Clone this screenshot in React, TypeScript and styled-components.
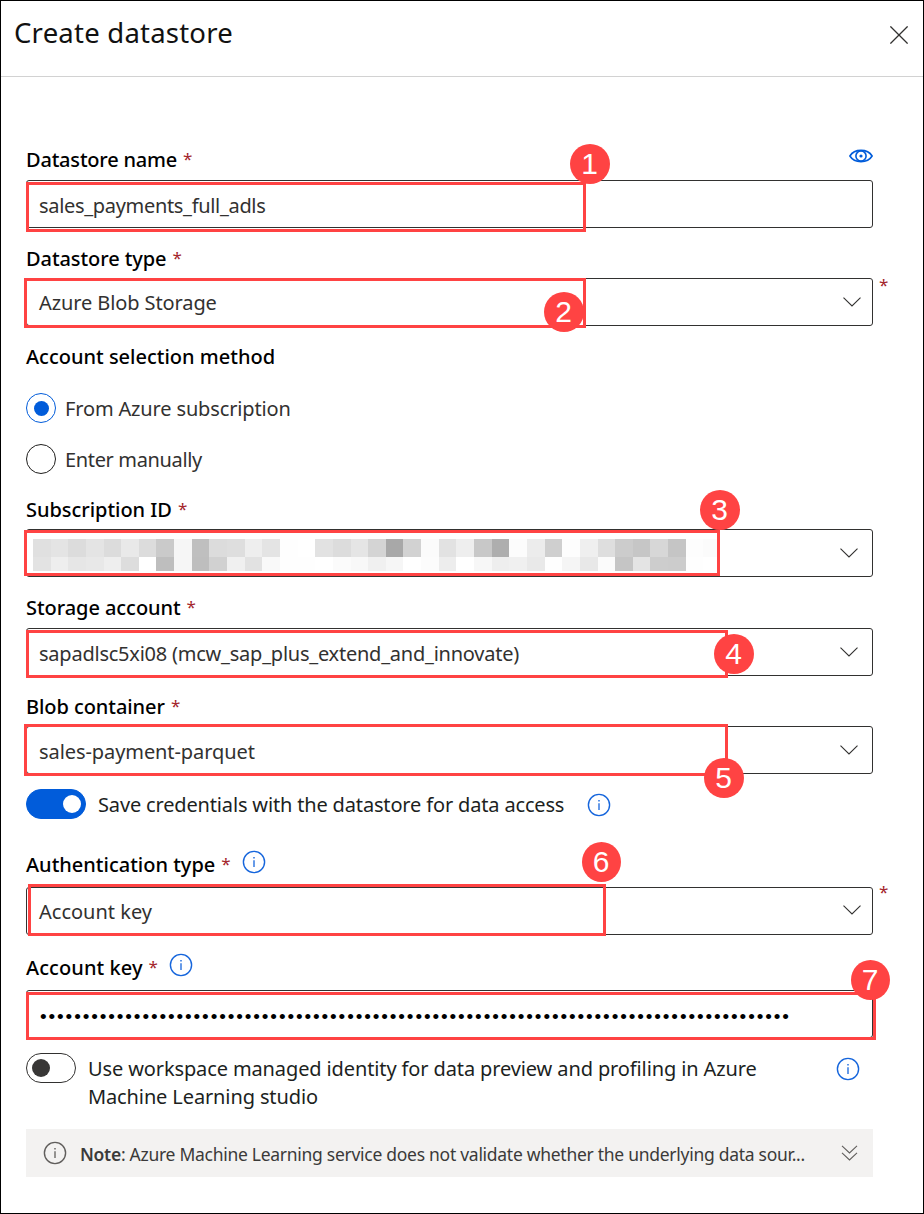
import React from "react";
import styled, { createGlobalStyle } from "styled-components";

const GlobalStyle = createGlobalStyle`
  *, *::before, *::after { box-sizing: border-box; }
  body { margin: 0; background: #fff; }
`;

const ACCENT = "#015cda";
const MARK = "#ff4343";

const Panel = styled.div`
  width: 924px;
  height: 1214px;
  border: 1px solid #000;
  background: #fff;
  color: #323130;
  font-family: "Noto Sans", "Open Sans", sans-serif;
  font-size: 20px;
  font-weight: 380;
  overflow: hidden;
`;

const Header = styled.header`
  display: flex;
  justify-content: space-between;
  height: 76px;
  padding: 12px 15px 0 13px;
  border-bottom: 1px solid #d2d2d2;
`;

const Title = styled.h1`
  margin: 0;
  color: #111;
  font-size: 27.5px;
  font-weight: 380;
  line-height: 40px;
  letter-spacing: 0.22px;
`;

const CloseButton = styled.button`
  display: flex;
  width: 18px;
  height: 18px;
  margin-top: 13px;
  padding: 0;
  border: 0;
  background: none;
`;

const Form = styled.main`
  width: 847px;
  margin-left: 25px;
  padding-top: 68px;
`;

const LabelRow = styled.div<{ $before?: number; $after?: number; $ls?: number }>`
  display: flex;
  align-items: center;
  height: 28px;
  margin-top: ${(p) => p.$before ?? 16}px;
  margin-bottom: ${(p) => p.$after ?? 6}px;
  padding-top: 2px;
  color: #000;
  font-weight: 500;
  line-height: 26px;
  white-space: nowrap;
  letter-spacing: ${(p) => p.$ls ?? 0}px;
`;

const Star = styled.span`
  margin: -3px 0 0 6px;
  color: #a4262c;
  font-size: 17px;
  font-weight: 400;
`;

const OuterStar = styled(Star)<{ $top?: number }>`
  position: absolute;
  left: 852px;
  top: ${(p) => p.$top ?? -6}px;
  margin: 0;
  line-height: 24px;
`;

const LabelIcon = styled.span`
  display: flex;
  margin: -6px 0 0 11px;
`;

const EyeButton = styled.button`
  display: flex;
  margin: -8px 0 0 auto;
  padding: 0;
  border: 0;
  background: none;
`;

const Control = styled.div<{ $chevron?: number; $lift?: number }>`
  position: relative;
  display: flex;
  align-items: center;
  justify-content: space-between;
  height: 48px;
  padding: 0 ${(p) => p.$chevron ?? 14}px 0 12px;
  border: 1px solid #323130;
  border-radius: 3px;

  > svg { margin-bottom: ${(p) => p.$lift ?? 0}px; }
`;

const Value = styled.span<{ $ls?: number; $drop?: number }>`
  padding-top: ${(p) => p.$drop ?? 2}px;
  line-height: 28px;
  white-space: nowrap;
  letter-spacing: ${(p) => p.$ls ?? 0}px;
`;

const Dots = styled.span`
  padding: 6px 0 0 1px;
  color: #000;
  font-family: "Liberation Sans", sans-serif;
  font-size: 19px;
  line-height: 28px;
  white-space: nowrap;
  letter-spacing: 1.88px;
`;

const Outline = styled.div<{ $x: number; $y: number; $w: number; $h: number }>`
  position: absolute;
  z-index: 1;
  left: ${(p) => p.$x}px;
  top: ${(p) => p.$y}px;
  width: ${(p) => p.$w}px;
  height: ${(p) => p.$h}px;
  border: 3px solid ${MARK};
`;

const Badge = styled.div<{ $x: number; $y: number; $w?: number }>`
  position: absolute;
  z-index: 2;
  left: ${(p) => p.$x}px;
  top: ${(p) => p.$y}px;
  width: ${(p) => p.$w ?? 40}px;
  height: 40px;
  border-radius: 50%;
  background: ${MARK};
  color: #fff;
  font-family: "Liberation Sans", sans-serif;
  font-size: 30px;
  line-height: 39px;
  text-align: center;
  text-indent: -1px;
`;

const Mosaic = styled.div`
  display: grid;
  grid-template-columns: repeat(39, 17.65px);
  grid-template-rows: 18px 14px;
  width: 684px;
  margin: 3px 0 0 -6px;
  overflow: hidden;
`;

const Tile = styled.i<{ $shade: string }>`
  background: ${(p) => `#${p.$shade}${p.$shade}${p.$shade}`};
`;

const RadioRow = styled.label<{ $before: number }>`
  display: flex;
  align-items: center;
  gap: 9px;
  height: 30px;
  margin-top: ${(p) => p.$before}px;
`;

const RadioRing = styled.span<{ $on?: boolean }>`
  display: flex;
  align-items: center;
  justify-content: center;
  width: 30px;
  height: 30px;
  border: 1px solid ${(p) => (p.$on ? ACCENT : "#201f1e")};
  border-radius: 50%;

  &::after {
    content: "";
    width: 15px;
    height: 15px;
    border-radius: 50%;
    background: ${(p) => (p.$on ? ACCENT : "transparent")};
  }
`;

const ToggleRow = styled.div`
  display: flex;
  margin-top: 15px;
  color: #201f1e;
`;

const Switch = styled.span<{ $on?: boolean }>`
  display: flex;
  flex: none;
  align-items: center;
  justify-content: ${(p) => (p.$on ? "flex-end" : "flex-start")};
  width: ${(p) => (p.$on ? 60 : 50)}px;
  height: 30px;
  padding: 0 ${(p) => (p.$on ? 4 : 5)}px;
  border: 1px solid ${(p) => (p.$on ? ACCENT : "#323130")};
  border-radius: 15px;
  background: ${(p) => (p.$on ? ACCENT : "#fff")};

  &::after {
    content: "";
    width: 18px;
    height: 18px;
    border-radius: 50%;
    background: ${(p) => (p.$on ? "#fff" : "#383736")};
  }
`;

const ToggleText = styled.span<{ $ls?: number }>`
  height: 56px;
  margin: 2px 0 -1px 12px;
  line-height: 28px;
  white-space: nowrap;
  letter-spacing: ${(p) => p.$ls ?? 0}px;
`;

const ShortToggleText = styled(ToggleText)`
  height: 28px;
  margin-bottom: 0;
`;

const ToggleIcon = styled.span<{ $left?: string; $top: number; $right?: number }>`
  display: flex;
  height: 24px;
  margin: ${(p) => p.$top}px ${(p) => p.$right ?? 0}px 0 ${(p) => p.$left ?? "auto"};
`;

const NoteBar = styled.div`
  display: flex;
  align-items: center;
  height: 48px;
  margin-top: 19px;
  padding: 0 15px 0 17px;
  background: #f3f2f1;
  color: #3b3a39;
  font-size: 17.5px;
`;

const NoteText = styled.span`
  margin-left: 13px;
  padding-top: 1px;
  line-height: 28px;
  white-space: nowrap;
  letter-spacing: -0.28px;

  b { font-weight: 600; }
`;

const NoteChevron = styled.span`
  display: flex;
  margin-left: auto;
`;

const InfoIcon = ({ color = "#1565dc" }: { color?: string }) => (
  <svg width="24" height="24" viewBox="0 0 24 24" fill="none" stroke={color}>
    <circle cx="12" cy="12" r="10.6" strokeWidth="1.4" />
    <path d="M12 10.2V17" strokeWidth="1.3" />
    <path d="M12 7V8.6" strokeWidth="1.4" />
  </svg>
);

const Chevron = () => (
  <svg width="18" height="10" viewBox="0 0 18 10" fill="none" stroke="#323130" strokeWidth="1.1">
    <path d="M.5 .6 9 9 17.5 .6" />
  </svg>
);

const EyeIcon = () => (
  <svg width="24" height="14" viewBox="0 0 24 14" fill="none" stroke={ACCENT} strokeWidth="1.6">
    <path d="M.9 7C3.2 3.2 7.2 1.4 12 1.4S20.800 3.200 23.100 7C20.800 10.800 16.800 12.600 12 12.600S3.200 10.800 .9 7Z" />
    <circle cx="12" cy="7" r="5.1" />
    <circle cx="12" cy="7" r="1.6" fill={ACCENT} stroke="none" />
  </svg>
);

const shades = [
  "e0 e4 dc e4 dc e9 dc ca f6 bf dc de ee e4 fe ff e2 dc e5 d4 a8 d2 fb e2 ee c8 ae fc ec cf fd ef de cc c6 d7 c5 fd fb",
  "e3 ee e6 e8 ee dd ff be f6 be d1 f0 e2 f9 fe fe ff fb f8 f0 f6 ff fc ed ff f7 ee f0 e9 fe f5 e8 fb c5 e4 cd cc fe ff",
]
  .join(" ")
  .split(" ");

export default function App() {
  return (
    <>
      <GlobalStyle />
      <Panel>
        <Header>
          <Title>Create datastore</Title>
          <CloseButton aria-label="Close">
            <svg width="18" height="18" viewBox="0 0 18 18" stroke="#323130" strokeWidth="1.3">
              <path d="M.4 .4 17.600 17.600M17.600 .4 .4 17.600" />
            </svg>
          </CloseButton>
        </Header>
        <Form>
          <LabelRow $before={0} $after={7} $ls={-0.2}>
            Datastore name<Star>*</Star>
            <EyeButton aria-label="Preview"><EyeIcon /></EyeButton>
          </LabelRow>
          <Control>
            <Value $drop={4} $ls={-0.32}>sales_payments_full_adls</Value>
            <Outline $x={-1} $y={1} $w={560} $h={50} />
            <Badge $x={543} $y={-37}>1</Badge>
          </Control>

          <LabelRow $ls={-0.08}>Datastore type<Star>*</Star></LabelRow>
          <Control $chevron={11}>
            <Value $ls={-0.1}>Azure Blob Storage</Value>
            <Chevron />
            <OuterStar>*</OuterStar>
            <Outline $x={-3} $y={-1} $w={562} $h={50} />
            <Badge $x={517} $y={13}>2</Badge>
          </Control>

          <LabelRow $after={0}>Account selection method</LabelRow>
          <RadioRow $before={23}>
            <RadioRing $on />
            <Value $ls={-0.15}>From Azure subscription</Value>
          </RadioRow>
          <RadioRow $before={21}>
            <RadioRing />
            <Value $ls={-0.35}>Enter manually</Value>
          </RadioRow>

          <LabelRow $before={21} $ls={-0.04}>Subscription ID<Star>*</Star></LabelRow>
          <Control>
            <Mosaic>
              {shades.map((s, i) => <Tile key={i} $shade={s} />)}
            </Mosaic>
            <Chevron />
            <Outline $x={-3} $y={0} $w={696} $h={46} />
            <Badge $x={673} $y={-40}>3</Badge>
          </Control>

          <LabelRow $after={7} $ls={-0.06}>Storage account<Star>*</Star></LabelRow>
          <Control>
            <Value $drop={4} $ls={-0.23}>sapadlsc5xi08 (mcw_sap_plus_extend_and_innovate)</Value>
            <Chevron />
            <Outline $x={-1} $y={1} $w={702} $h={48} />
            <Badge $x={687} $y={5}>4</Badge>
          </Control>

          <LabelRow $ls={-0.07}>Blob container<Star>*</Star></LabelRow>
          <Control>
            <Value $drop={4} $ls={-0.08}>sales-payment-parquet</Value>
            <Chevron />
            <Outline $x={-3} $y={-3} $w={704} $h={52} />
            <Badge $x={677} $y={31}>5</Badge>
          </Control>

          <ToggleRow>
            <Switch $on />
            <ShortToggleText $ls={-0.16}>Save credentials with the datastore for data access</ShortToggleText>
            <ToggleIcon $left="23px" $top={4}><InfoIcon /></ToggleIcon>
          </ToggleRow>

          <LabelRow $before={31} $after={9}>
            Authentication type<Star>*</Star>
            <LabelIcon><InfoIcon /></LabelIcon>
          </LabelRow>
          <Control $chevron={11} $lift={3}>
            <Value>Account key</Value>
            <Chevron />
            <OuterStar $top={-8}>*</OuterStar>
            <Outline $x={1} $y={-4} $w={578} $h={52} />
            <Badge $x={555} $y={-46} $w={39}>6</Badge>
          </Control>

          <LabelRow $before={18} $after={9} $ls={0.08}>
            Account key<Star>*</Star>
            <LabelIcon><InfoIcon /></LabelIcon>
          </LabelRow>
          <Control>
            <Dots>{"•".repeat(88)}</Dots>
            <Outline $x={-1} $y={1} $w={850} $h={48} />
            <Badge $x={824} $y={-31} $w={39}>7</Badge>
          </Control>

          <ToggleRow>
            <Switch />
            <ToggleText $ls={-0.12}>
              Use workspace managed identity for data preview and profiling in Azure
              <br />
              Machine Learning studio
            </ToggleText>
            <ToggleIcon $top={4} $right={13}><InfoIcon /></ToggleIcon>
          </ToggleRow>

          <NoteBar>
            <InfoIcon color="#605e5c" />
            <NoteText>
              <b>Note</b>: Azure Machine Learning service does not validate whether the underlying data sour...
            </NoteText>
            <NoteChevron>
              <svg width="17" height="16" viewBox="0 0 17 16" fill="none" stroke="#605e5c" strokeWidth="1.1">
                <path d="M1 .8 8.500 8 16 .8M1 7.800 8.500 15 16 7.800" />
              </svg>
            </NoteChevron>
          </NoteBar>
        </Form>
      </Panel>
    </>
  );
}
